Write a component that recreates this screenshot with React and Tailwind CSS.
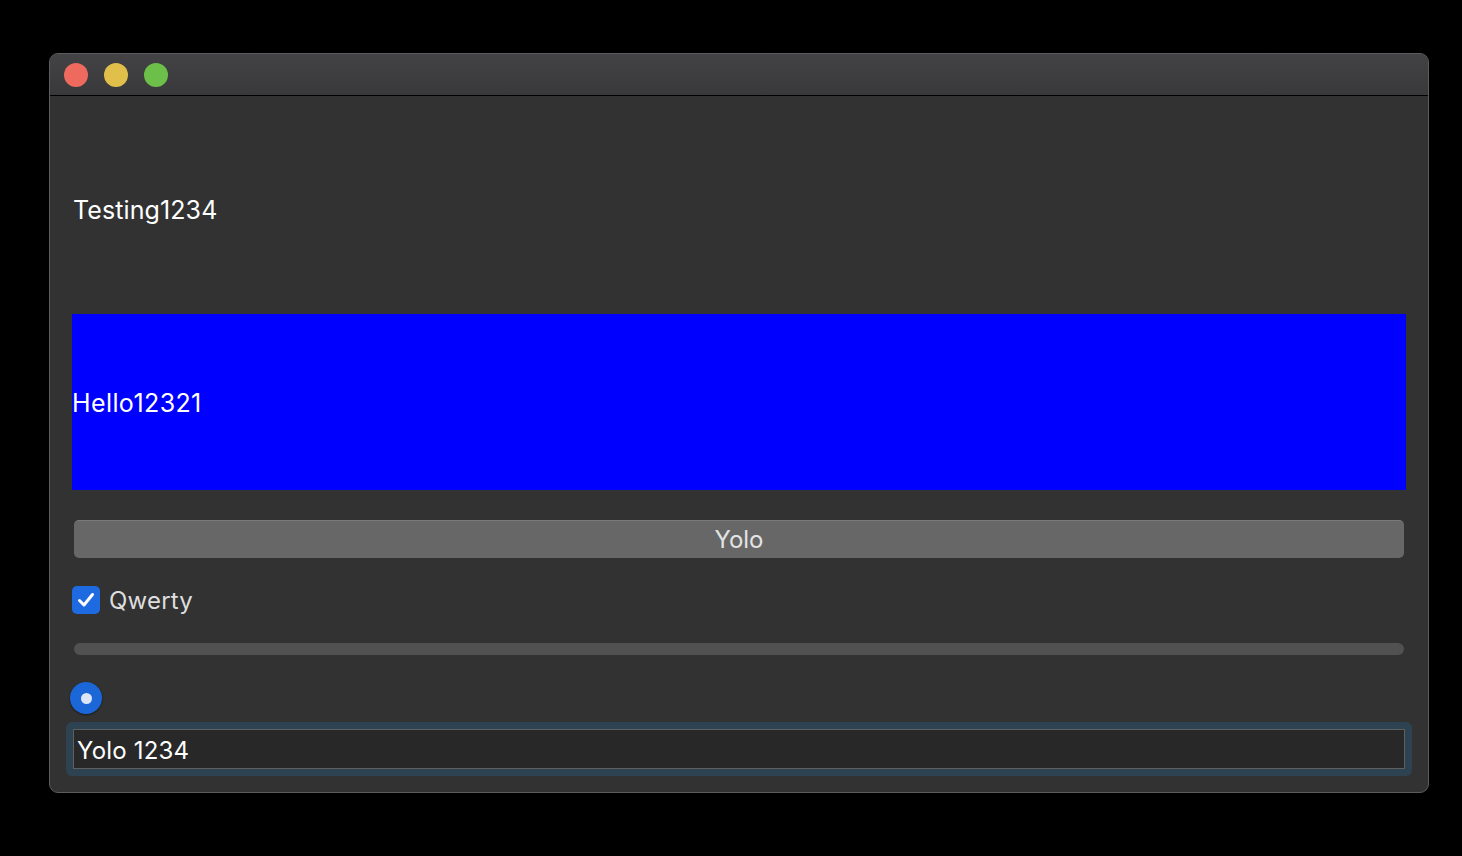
import React from 'react';

const font = { fontFamily: 'Inter, "Liberation Sans", sans-serif' };

const App = () => {
    return (
        <div className="w-[1462px] h-[856px] bg-black pt-[53px] pl-[49px]" style={font}>
            <div className="w-[1380px] h-[740px] rounded-[9px] border border-[#5c5c5e] bg-[#323232] overflow-hidden flex flex-col">
                {/* Title bar */}
                <div className="h-[42px] shrink-0 flex items-center gap-[16px] pl-[14px] border-b border-black bg-gradient-to-b from-[#434345] to-[#39393b]">
                    <span className="w-[24px] h-[24px] rounded-full bg-[#ee6a5e]" />
                    <span className="w-[24px] h-[24px] rounded-full bg-[#e1bf4b]" />
                    <span className="w-[24px] h-[24px] rounded-full bg-[#6cc04a]" />
                </div>

                {/* Content */}
                <div className="flex flex-col px-[22px]">
                    <div className="h-[218px] flex items-center pt-[12px] pl-px text-white text-[25px] tracking-[0.1px]">
                        Testing1234
                    </div>

                    <div className="h-[176px] bg-[#0000ff] flex items-center pt-[4px] text-white text-[25px] tracking-[0.4px]">
                        Hello12321
                    </div>

                    <div className="mt-[30px] mx-[2px] h-[38px] rounded-[5px] bg-[#676767] border-t border-[#7a7a7a] flex items-center justify-center text-[#e3e3e3] text-[24px]">
                        Yolo
                    </div>

                    <div className="mt-[28px] h-[28px] flex items-center gap-[9px]">
                        <span className="w-[28px] h-[28px] rounded-[5px] bg-[#1e6ae0] flex items-center justify-center">
                            <svg width="20" height="20" viewBox="0 0 20 20" fill="none">
                                <path d="M3.5 10.5 L8 15 L16.5 4.5" stroke="#ffffff" strokeWidth="3" strokeLinecap="round" strokeLinejoin="round" />
                            </svg>
                        </span>
                        <span className="text-[#dedede] text-[24px] tracking-[0.2px] pt-[2px]">Qwerty</span>
                    </div>

                    <div className="mt-[29px] mx-[2px] h-[12px] rounded-full bg-[#515151]" />

                    <div className="mt-[27px] h-[32px] flex items-center">
                        <span className="w-[32px] h-[32px] -ml-[2px] rounded-full bg-[#1b67d8] shadow-[0_1px_2px_rgba(0,0,0,0.5)] flex items-center justify-center">
                            <span className="w-[11px] h-[11px] rounded-full bg-[#dde6f8]" />
                        </span>
                    </div>

                    <div className="mt-[8px] -mx-[6px] h-[54px] rounded-[6px] bg-[#2d4352] p-[7px]">
                        <div className="h-full bg-[#282828] border border-[#5f5f5f] flex items-center pl-[3px] pt-[3px] text-white text-[24px] tracking-[0.2px]">
                            Yolo 1234
                        </div>
                    </div>
                </div>
            </div>
        </div>
    );
};

export default App;
